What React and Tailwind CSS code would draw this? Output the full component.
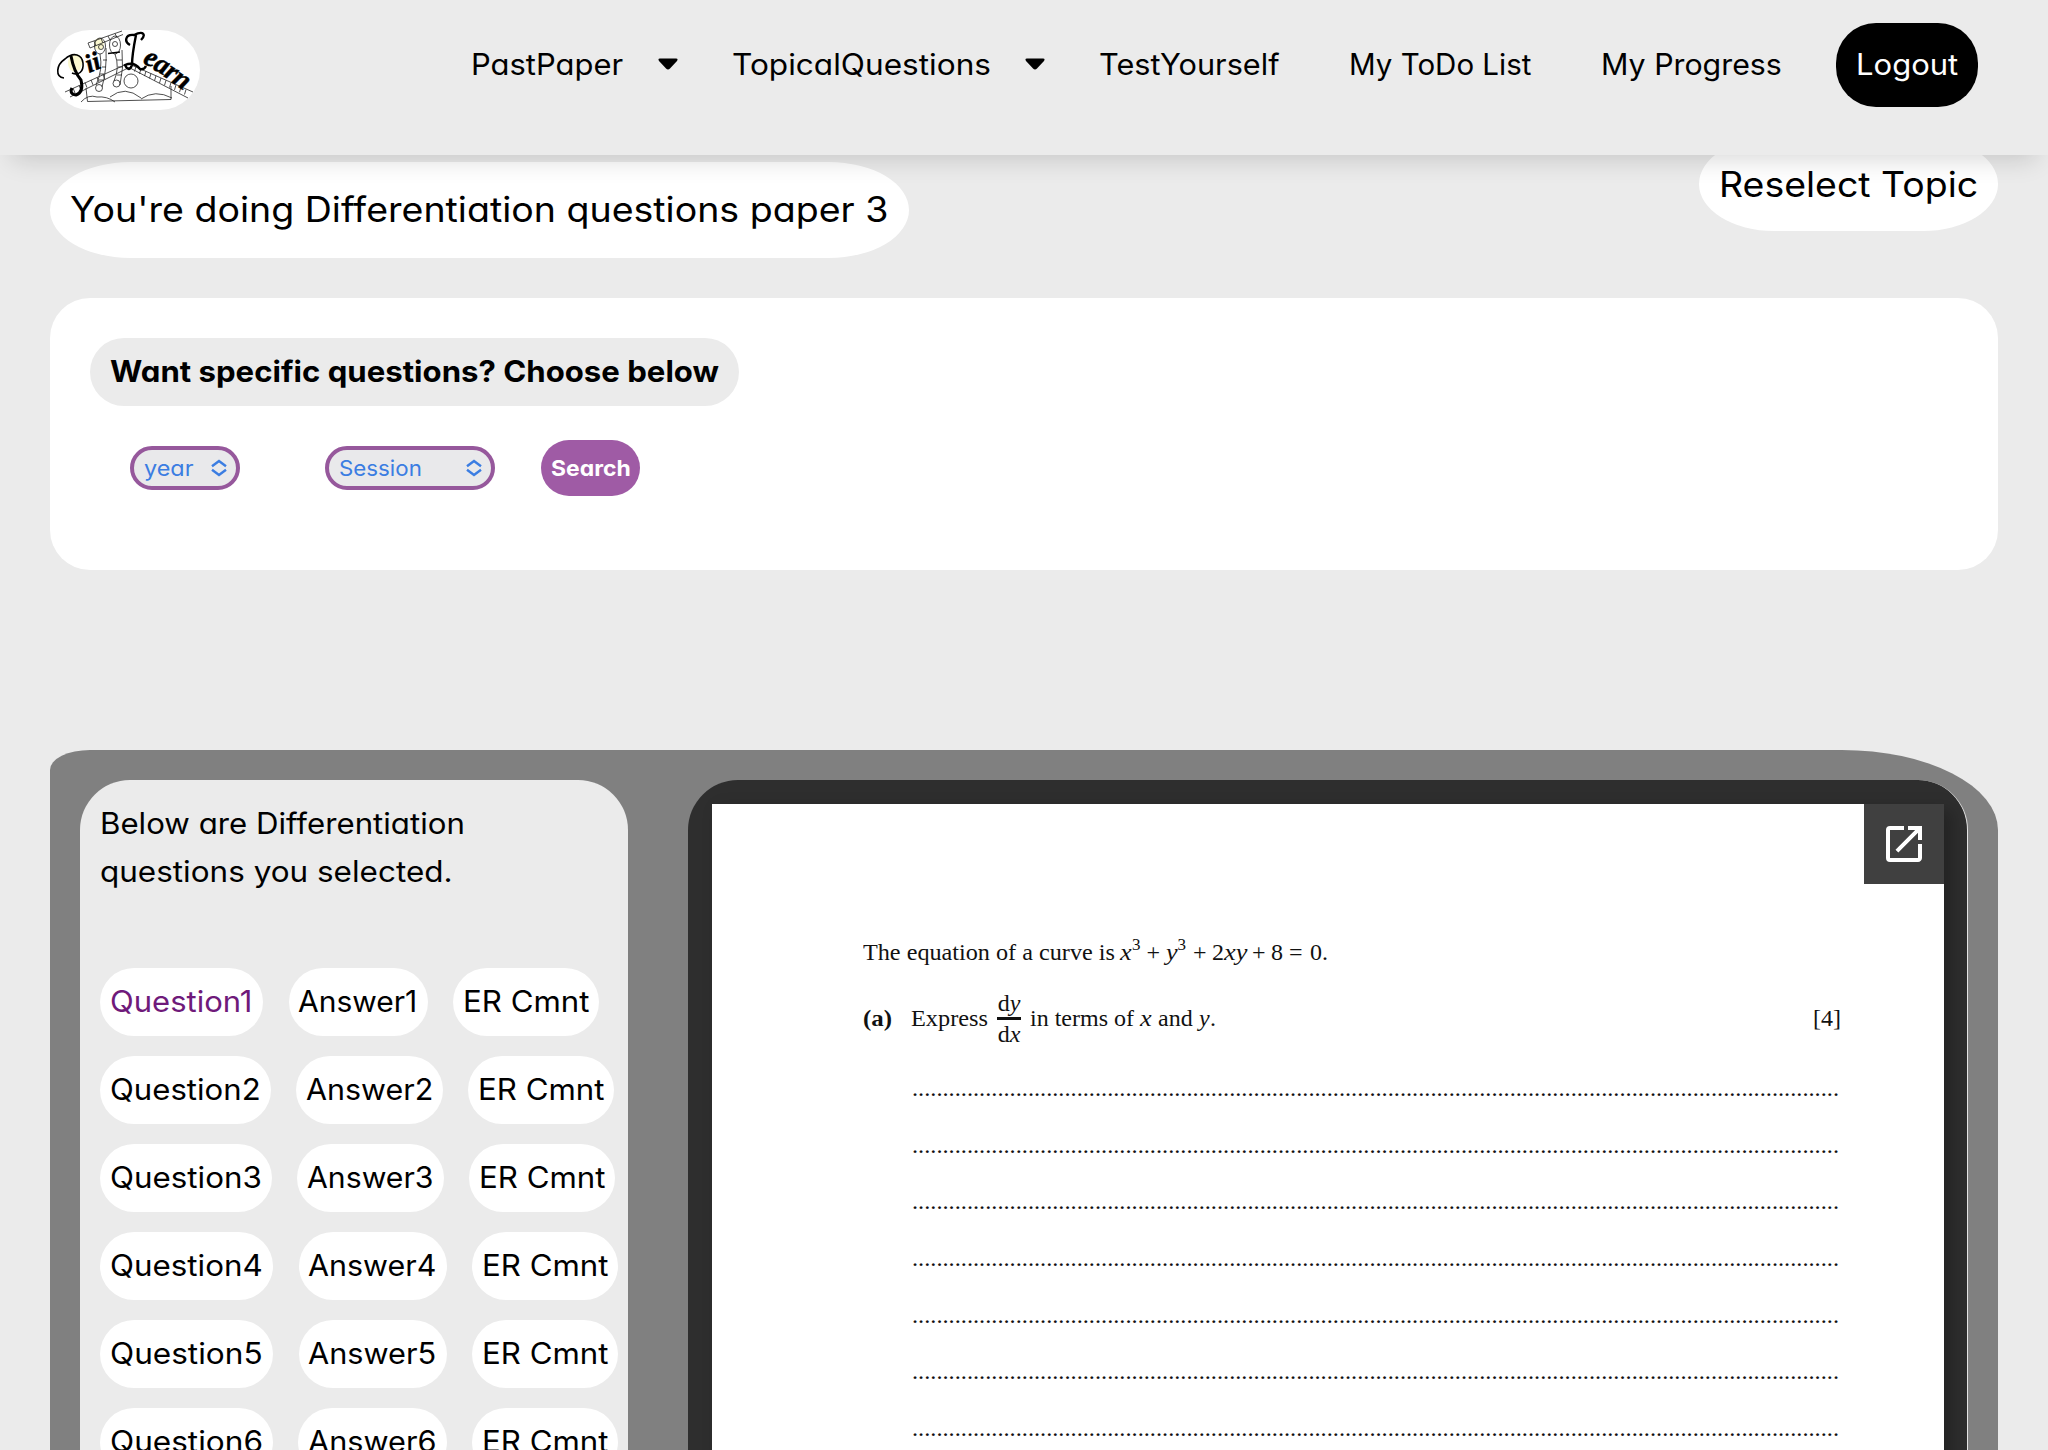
import { useLayoutEffect, useRef } from "react";
import { MdOpenInNew } from "react-icons/md";

/* Text run stretched horizontally so that it fills a given width. */
function Fit({ w, children, className = "" }) {
  const ref = useRef(null);
  useLayoutEffect(() => {
    const el = ref.current;
    el.style.transform = `scaleX(${w / el.offsetWidth})`;
  }, [w, children]);
  return (
    <span className={`inline-block shrink-0 whitespace-pre ${className}`} style={{ width: w }}>
      <span ref={ref} className="inline-block origin-left">
        {children}
      </span>
    </span>
  );
}

function Logo() {
  const ties = [0, 1, 2, 3, 4, 5, 6, 7, 8, 9, 10];
  return (
    <svg viewBox="0 0 150 80" className="h-20 w-[150px] rounded-[40px] bg-white" fill="none" stroke="#222" strokeWidth="0.8">
      <ellipse cx="25" cy="33" rx="7" ry="9" fill="#fbf8cf" stroke="none" />
      <ellipse cx="49" cy="14" rx="5" ry="6" fill="#fbf8cf" stroke="none" />
      <path d="M15 62 L78 33.500 L143 62" />
      <path d="M20 67 L79 37.500 L138 68" />
      {ties.map((i) => (
        <path key={i} d={`M${86 + i * 5} ${36.5 + i * 2.3} l-1.500 5`} />
      ))}
      {[0, 1, 2, 3, 4, 5].map((i) => (
        <path key={i} d={`M${23 + i * 6} ${58 - i * 2.7} l2 5`} />
      ))}
      <path d="M36 58 L37.500 71.500 L121 69.500 V56" />
      <path d="M31 72 Q38 64 47 67 Q57 66 65 72 M60 67 Q75 55 91 68 M91 69 Q105 59 122 68" />
      <circle cx="81" cy="51" r="7" />
      <path d="M38 13 L72 1 M40 18 L73 4.500 M38 13 l2 5 M44 11 l2 5 M51 8.500 l2 4.500 M58 6 l2 4 M65 3.500 l2 4" />
      <ellipse cx="50" cy="16" rx="5.500" ry="8" />
      <ellipse cx="65" cy="15" rx="5.500" ry="9" />
      <circle cx="51" cy="17" r="2.500" />
      <circle cx="65" cy="14" r="2.500" />
      <path d="M50 24 Q53 40 46 55 M56 18 Q57 40 52 57 M53 30 h4 M52 37 h4 M50 44 h4 M49 50 h4" />
      <circle cx="49" cy="58" r="3.500" />
      <path d="M65 24 Q70 38 64 51 M72 20 Q74 38 70 55 M67 30 h5 M68 37 h5 M67 45 h5" />
      <circle cx="66.500" cy="53.500" r="3.500" />
      <path d="M14 48 C5 47 6 35 15 29 C24 21 32 25 33 33 C34 42 28 46 22 43" stroke="#000" strokeWidth="1.600" />
      <path d="M21 26 Q24 42 31 50 Q34 62 26 65 Q19 64 22 58" stroke="#000" strokeWidth="3" />
      <path d="M80 15 C74 12 75 4 84 5 C94 0 96 5 91 10 M86 5 Q82 25 82 35 Q79 43 75 35 Q84 31 90 39 Q94 40 96 36" stroke="#000" strokeWidth="2.400" />
      <path d="M58 23.500 L70 22" stroke="#000" strokeWidth="1.500" />
      <g fill="#000" stroke="#000" strokeWidth="0.500" fontFamily="'Liberation Serif', serif" fontStyle="italic" fontWeight="700">
        <text transform="translate(39 43) rotate(-22)" fontSize="26">ii</text>
        <text transform="translate(92 33) rotate(24)" fontSize="28">e</text>
        <text transform="translate(102 39) rotate(28)" fontSize="28">a</text>
        <text transform="translate(113 46) rotate(32)" fontSize="28">r</text>
        <text transform="translate(121 52) rotate(34)" fontSize="28">n</text>
      </g>
    </svg>
  );
}

function Caret({ className }) {
  return (
    <svg viewBox="0 0 20 12" className={`h-3 w-5 shrink-0 ${className}`}>
      <path d="M2 0.500 H18 Q20.500 0.800 19 3 L12 10.500 Q10 12.300 8 10.500 L1 3 Q-0.500 0.800 2 0.500Z" fill="#000" />
    </svg>
  );
}

function Select({ label, w, className }) {
  return (
    <div className={`flex h-11 items-center justify-between rounded-[22px] border-4 border-[#96589c] bg-[#e9e9eb] pl-[10px] pr-[9px] text-[21.500px] text-[#3b7de2] ${className}`}>
      <Fit w={w}>{label}</Fit>
      <svg viewBox="0 0 16 18" className="h-[18px] w-4" fill="none" stroke="#3b7de2" strokeWidth="2.400">
        <path d="M1 7.200 L8 2 L15 7.200 M1 10.800 L8 16 L15 10.800" />
      </svg>
    </div>
  );
}

const rows = [
  { n: 1, q: 163, a: 139, gap: "gap-[25.500px]" },
  { n: 2, q: 171, a: 147, gap: "gap-[25px]" },
  { n: 3, q: 172, a: 147, gap: "gap-[25px]" },
  { n: 4, q: 173, a: 148, gap: "gap-[25.500px]" },
  { n: 5, q: 173, a: 148, gap: "gap-[25.500px]" },
  { n: 6, q: 173, a: 149, gap: "gap-[25px]" },
];

function Pill({ w, active, children }) {
  return (
    <div className={`flex h-[68px] items-center rounded-[34px] bg-white pb-0.5 pl-[9.500px] pr-[10.500px] ${active ? "text-[#6f1a7a]" : "text-black"}`}>
      <Fit w={w - 20}>{children}</Fit>
    </div>
  );
}

export default function App() {
  const dots = ".".repeat(152);
  return (
    <div className="h-[1450px] overflow-hidden bg-[#ebebeb] font-['Inter',sans-serif] text-[29.500px] text-black [font-feature-settings:'cv11']">
      <header className="relative z-10 h-[155px] bg-[#ebebeb] pl-[50px] shadow-[0_16px_24px_-12px_rgba(0,0,0,0.16)]">
        <div className="flex pt-[23px]">
          <div className="pt-[7px]"><Logo /></div>
          <nav className="ml-[271px] flex h-[84px] items-center pb-0.5">
            <Fit w={152}>PastPaper</Fit>
            <Caret className="ml-[35px]" />
            <Fit w={259} className="ml-[54px]">TopicalQuestions</Fit>
            <Caret className="ml-[34px]" />
            <Fit w={181} className="ml-[54px]">TestYourself</Fit>
            <Fit w={182} className="ml-[69px]">My ToDo List</Fit>
            <Fit w={181} className="ml-[70px]">My Progress</Fit>
            <div className="-mb-0.5 ml-[54px] flex h-[84px] w-[142px] items-center rounded-[40px] bg-black pb-0.5 pl-5 text-white">
              <Fit w={102}>Logout</Fit>
            </div>
          </nav>
        </div>
      </header>

      <main className="px-[50px]">
        <div className="flex h-[143px] items-start justify-between text-[35px]">
          <div className="mt-[7px] flex h-24 w-[859px] items-center rounded-[80px/48px] bg-white pb-0.5 pl-5">
            <Fit w={818}>You're doing Differentiation questions paper 3</Fit>
          </div>
          <div className="-mt-[18px] flex h-[94px] w-[299px] items-center rounded-[75px/47px] bg-white pl-5">
            <Fit w={259}>Reselect Topic</Fit>
          </div>
        </div>

        <section className="h-[272px] rounded-[40px] bg-white px-10 pt-10">
          <div className="flex h-[68px] w-[649px] items-center rounded-[34px] bg-[#ebebeb] pb-0.5 pl-5 font-bold">
            <Fit w={609}>Want specific questions? Choose below</Fit>
          </div>
          <div className="mt-[34px] flex h-14 items-center pl-10">
            <Select label="year" w={49} className="w-[110px]" />
            <Select label="Session" w={83} className="ml-[85px] w-[170px]" />
            <div className="ml-[46px] flex h-14 w-[99px] items-center rounded-[28px] bg-[#9f5ba5] pl-[9.500px] text-[21.500px] font-bold text-white">
              <Fit w={80}>Search</Fit>
            </div>
          </div>
        </section>

        <section className="mt-[180px] flex h-[760px] rounded-[40px_156px_0_0/20px_80px_0_0] bg-[#808080] pl-[30px] pt-[30px]">
          <aside className="h-[730px] w-[548px] rounded-t-[50px] bg-[#ebebeb] pl-5 pt-[19px]">
            <p className="flex flex-col items-start leading-[48px]">
              <Fit w={365}>Below are Differentiation</Fit>
              <Fit w={353}>questions you selected.</Fit>
            </p>
            <div className="mt-[73px] flex flex-col gap-5">
              {rows.map((r) => (
                <div key={r.n} className={`flex ${r.gap}`}>
                  <Pill w={r.q} active={r.n === 1}>{`Question${r.n}`}</Pill>
                  <Pill w={r.a}>{`Answer${r.n}`}</Pill>
                  <Pill w={146}>ER Cmnt</Pill>
                </div>
              ))}
            </div>
          </aside>

          <div className="ml-[60px] h-[730px] w-[1280px] overflow-hidden rounded-t-[50px] border-r border-[#e4e4e4] bg-[#2e2e2e] pl-6 pt-6">
            <div className="h-[706px] w-[1232px] bg-white font-['Liberation_Serif',serif] text-[24px] text-[#111] shadow-[8px_6px_16px_rgba(0,0,0,0.25)] [font-feature-settings:normal]">
              <div className="flex justify-end">
                <div className="flex size-20 items-center justify-center bg-[#404040] text-white">
                  <MdOpenInNew className="size-12" />
                </div>
              </div>
              <div className="mt-[53px] flex h-[30px] items-baseline pl-[151px] leading-[30px]">
                <Fit w={252}>The equation of a curve is</Fit>
                <Fit w={12} className="ml-[5px] italic">x</Fit>
                <span className="mr-[2px] -translate-y-[10px] text-[17px]">3</span>
                <Fit w={14} className="ml-1">+</Fit>
                <Fit w={12} className="ml-[5px] italic">y</Fit>
                <span className="mr-[2px] -translate-y-[10px] text-[17px]">3</span>
                <Fit w={14} className="ml-[5px]">+</Fit>
                <Fit w={12} className="ml-[5px]">2</Fit>
                <Fit w={23} className="italic">xy</Fit>
                <Fit w={14} className="ml-[5px]">+</Fit>
                <Fit w={12} className="ml-[5px]">8</Fit>
                <Fit w={14} className="ml-1.5">=</Fit>
                <Fit w={18} className="ml-[7px]">0.</Fit>
              </div>
              <div className="mt-[21px] flex h-[60px] items-center pl-[151px]">
                <Fit w={29} className="font-bold">(a)</Fit>
                <Fit w={77} className="ml-[19px]">Express</Fit>
                <span className="ml-[9px] flex w-6 flex-col items-center">
                  <span className="flex h-7 items-center leading-[28px]">d<i>y</i></span>
                  <span className="h-[3px] w-6 bg-[#111]" />
                  <span className="flex h-7 items-center leading-[28px]">d<i>x</i></span>
                </span>
                <span className="ml-[9px] flex">
                  <Fit w={110}>{"in terms of "}</Fit>
                  <Fit w={12} className="italic">x</Fit>
                  <Fit w={47}>{" and "}</Fit>
                  <Fit w={11} className="italic">y</Fit>
                  <Fit w={6}>.</Fit>
                </span>
                <Fit w={28} className="ml-[597px]">[4]</Fit>
              </div>
              <div className="mt-[12px] flex flex-col pl-[200px]">
                {[1, 2, 3, 4, 5, 6, 7].map((i) => (
                  <div key={i} className="h-[56.700px] leading-[56.700px]">
                    <Fit w={927}>{dots}</Fit>
                  </div>
                ))}
              </div>
            </div>
          </div>
        </section>
      </main>
    </div>
  );
}
